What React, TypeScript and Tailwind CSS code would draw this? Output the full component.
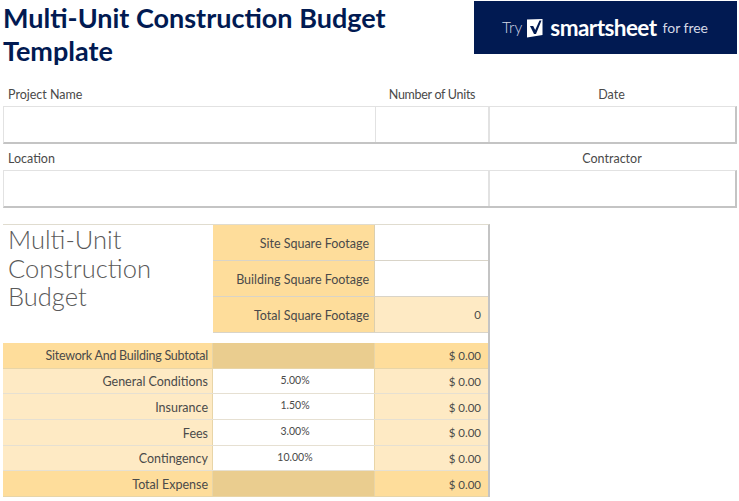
const font = "font-['Lato','Liberation_Sans',sans-serif]"

const expenses = [
  { label: "General Conditions", rate: "5.00%" },
  { label: "Insurance", rate: "1.50%" },
  { label: "Fees", rate: "3.00%" },
  { label: "Contingency", rate: "10.00%" },
]

function SmartsheetMark() {
  return (
    <svg width="16" height="20" viewBox="0 0 16 20" className="shrink-0">
      <path d="M0 1.5 L15.5 1 V17 L0 19.5 Z" fill="#ffffff" />
      <path d="M3 8 L6.2 8 L8.2 12 L12.5 2.5 L14.5 2.5 L9 16 L7 16 Z" fill="#011a52" />
    </svg>
  )
}

function AmountRow({ label, rate, tone, tight }: { label: string; rate?: string; tone: "strong" | "light"; tight?: boolean }) {
  const strong = tone === "strong"
  return (
    <div className={`grid grid-cols-[210px_162px_113px] h-[25.7px] border-b text-[#4a4a4a] ${strong ? "border-[#e8d5a8]" : "border-[#e6e0d2]"}`}>
      <div className={`flex items-center justify-end pr-[4px] pt-[3px] border-r border-[#e8d5a8] text-[12.5px] ${tight ? "tracking-[-0.25px]" : ""} ${strong ? "bg-[#fedd9b]" : "bg-[#feeac4]"}`}>{label}</div>
      <div className={`flex items-center justify-center text-[10.5px] pb-[1px] pl-[3px] border-r border-[#e8d5a8] ${strong ? "bg-[#eacd8f]" : "bg-white"}`}>{rate}</div>
      <div className={`flex items-center justify-end pr-[7px] pt-[1px] text-[11.5px] ${strong ? "bg-[#fedd9b]" : "bg-[#feeac4]"}`}>$ 0.00</div>
    </div>
  )
}

function FootageRow({ label, value }: { label: string; value?: string }) {
  return (
    <div className="grid grid-cols-[162px_113px] h-[36px] border-b border-[#d9d4c8] text-[12.5px] text-[#4a4a4a]">
      <div className="flex items-center justify-end pr-[5px] pt-[3px] bg-[#fedd9b] border-r border-[#dccfae]">{label}</div>
      <div className={`flex items-center justify-end pr-[7px] text-[11.5px] ${value ? "bg-[#feeac4]" : "bg-white"}`}>{value}</div>
    </div>
  )
}

export default function App() {
  return (
    <div className={`w-[739px] h-[501px] overflow-hidden bg-white ${font}`}>
      {/* Header */}
      <div className="flex justify-between h-[54px] mt-[1px] pl-[3px] pr-[2px]">
        <h1 className="w-[440px] text-[27px] leading-[33px] font-bold text-[#011a52]">
          Multi-Unit Construction Budget Template
        </h1>
        <div className="w-[263px] h-[53px] flex items-center pl-[28px] bg-[#011a52] text-white">
          <span className="text-[15.5px] font-light text-[#d5d9e6] mr-[5px]">Try</span>
          <SmartsheetMark />
          <span className="text-[22.5px] font-bold tracking-tight ml-[7px] mr-[6px]">smartsheet</span>
          <span className="text-[14px] text-[#d5d9e6]">for free</span>
        </div>
      </div>

      {/* Project details */}
      <div className="px-[3px] pr-[2px] text-[12.5px] text-[#4a4a4a]">
        <div className="grid grid-cols-[372px_114px_248px] h-[51px] items-end pb-[1px]">
          <span className="pl-[5px]">Project Name</span>
          <span className="text-center whitespace-nowrap tracking-[-0.3px]">Number of Units</span>
          <span className="text-center pr-[3px]">Date</span>
        </div>
        <div className="grid grid-cols-[372px_114px_248px] h-[38px] border border-[#e2e2e2] border-b-2 border-b-[#c4c4c4] border-r-2 border-r-[#c4c4c4]">
          <div className="border-r border-[#e2e2e2]" />
          <div className="border-r-2 border-[#e2e2e2]" />
          <div />
        </div>
        <div className="grid grid-cols-[486px_248px] h-[26px] items-end pb-[1px]">
          <span className="pl-[5px]">Location</span>
          <span className="text-center pr-[2px]">Contractor</span>
        </div>
        <div className="grid grid-cols-[486px_248px] h-[38px] border border-[#e2e2e2] border-b-2 border-b-[#c4c4c4] border-r-2 border-r-[#c4c4c4]">
          <div className="border-r-2 border-[#e2e2e2]" />
          <div />
        </div>
      </div>

      {/* Budget sheet */}
      <div className="w-[487px] ml-[3px] mt-[16px] border-t border-t-[#e0dccf] border-r-2 border-r-[#c4c4c4]">
        <div className="flex h-[108px]">
          <div className="w-[210px] shrink-0 pl-[5px] text-[25.5px] leading-[28.5px] text-[#595959] font-light">
            Multi-Unit Construction Budget
          </div>
          <div>
            <FootageRow label="Site Square Footage" />
            <FootageRow label="Building Square Footage" />
            <FootageRow label="Total Square Footage" value="0" />
          </div>
        </div>
        <div className="h-[10px]" />
        <AmountRow label="Sitework And Building Subtotal" tone="strong" tight />
        {expenses.map((item) => (
          <AmountRow key={item.label} label={item.label} rate={item.rate} tone="light" />
        ))}
        <AmountRow label="Total Expense" tone="strong" />
      </div>
    </div>
  )
}
